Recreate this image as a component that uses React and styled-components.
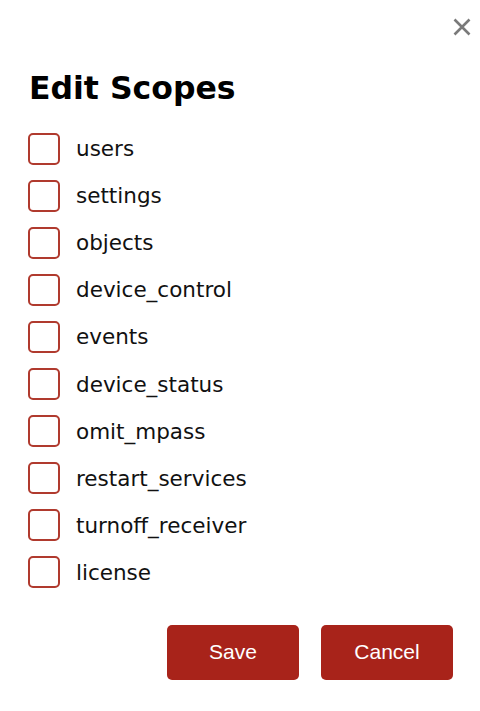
import React, { useState } from "react";
import styled, { createGlobalStyle } from "styled-components";

const GlobalStyle = createGlobalStyle`
  body {
    margin: 0;
    background: #ffffff;
    font-family: "DejaVu Sans", Verdana, sans-serif;
  }
`;

const Modal = styled.div`
  width: 480px;
  height: 711px;
  box-sizing: border-box;
  background: #fff;
  display: flex;
  flex-direction: column;
  padding: 0 27px 0 28px;
`;

const TopBar = styled.div`
  display: flex;
  justify-content: flex-end;
  height: 70px;
  padding-top: 17px;
  box-sizing: border-box;
  margin-right: -19px;
`;

const CloseButton = styled.button`
  border: none;
  background: none;
  padding: 0;
  width: 20px;
  height: 20px;
  cursor: pointer;
  display: flex;
  align-items: center;
  justify-content: center;
`;

const Title = styled.h2`
  margin: 0 0 19px 1px;
  font-family: "DejaVu Sans", Verdana, sans-serif;
  font-weight: bold;
  font-size: 31.5px;
  line-height: 36px;
  color: #000;
`;

const List = styled.div`
  display: flex;
  flex-direction: column;
`;

const Row = styled.label`
  display: flex;
  align-items: center;
  height: 47.1px;
  gap: 16px;
  cursor: pointer;
`;

const Box = styled.span`
  width: 32px;
  height: 32px;
  box-sizing: border-box;
  border: 2px solid #b03a2e;
  border-radius: 5px;
  background: ${(p) => (p.checked ? "#b03a2e" : "#fff")};
  flex-shrink: 0;
`;

const Label = styled.span`
  font-family: "DejaVu Sans", Verdana, sans-serif;
  font-size: 21.5px;
  color: #111;
`;

const Actions = styled.div`
  display: flex;
  justify-content: flex-end;
  gap: 22px;
  margin-top: 29px;
`;

const Button = styled.button`
  width: 132px;
  height: 55px;
  border: none;
  border-radius: 5px;
  background: #a8231a;
  color: #fff;
  font-family: "Liberation Sans", Arial, sans-serif;
  font-size: 21px;
  cursor: pointer;
`;

const scopes = [
  "users",
  "settings",
  "objects",
  "device_control",
  "events",
  "device_status",
  "omit_mpass",
  "restart_services",
  "turnoff_receiver",
  "license",
];

export default function App() {
  const [checked, setChecked] = useState({});
  const toggle = (s) => setChecked((c) => ({ ...c, [s]: !c[s] }));

  return (
    <>
      <GlobalStyle />
      <Modal>
        <TopBar>
          <CloseButton aria-label="Close">
            <svg width="18" height="18" viewBox="0 0 18 18">
              <path d="M1.5 1.5 L16.5 16.5 M16.5 1.5 L1.5 16.5" stroke="#7a7a7a" strokeWidth="2.6" />
            </svg>
          </CloseButton>
        </TopBar>
        <Title>Edit Scopes</Title>
        <List>
          {scopes.map((s) => (
            <Row key={s} onClick={() => toggle(s)}>
              <Box checked={checked[s]} />
              <Label>{s}</Label>
            </Row>
          ))}
        </List>
        <Actions>
          <Button>Save</Button>
          <Button>Cancel</Button>
        </Actions>
      </Modal>
    </>
  );
}
